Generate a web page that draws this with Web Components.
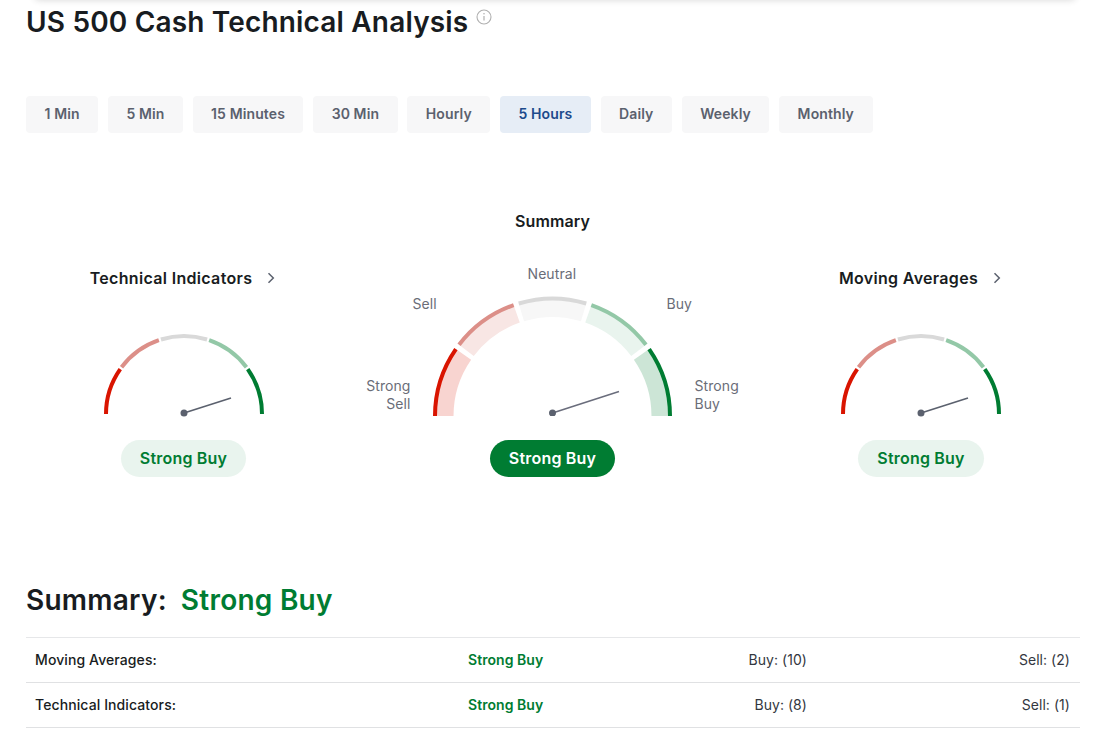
<!DOCTYPE html>
<html><head><meta charset="utf-8"><title>US 500 Cash Technical Analysis</title>
<style>
html,body{margin:0;padding:0;background:#fff;overflow:hidden}
body{font-family:Inter,"Liberation Sans",sans-serif;color:#181c21;height:750px}
</style></head><body>
<ta-page>
  <ta-heading>US 500 Cash Technical Analysis</ta-heading>
  <ta-tabs>
    <ta-tab>1 Min</ta-tab><ta-tab>5 Min</ta-tab><ta-tab>15 Minutes</ta-tab><ta-tab>30 Min</ta-tab><ta-tab>Hourly</ta-tab><ta-tab active>5 Hours</ta-tab><ta-tab>Daily</ta-tab><ta-tab>Weekly</ta-tab><ta-tab>Monthly</ta-tab>
  </ta-tabs>
  <ta-gauges>
    <ta-gauge title-text="Technical Indicators" link></ta-gauge>
    <ta-gauge title-text="Summary" large></ta-gauge>
    <ta-gauge title-text="Moving Averages" link></ta-gauge>
  </ta-gauges>
  <ta-summary>
    <ta-row name="Moving Averages:" signal="Strong Buy" buy="Buy: (10)" sell="Sell: (2)"></ta-row>
    <ta-row name="Technical Indicators:" signal="Strong Buy" buy="Buy: (8)" sell="Sell: (1)"></ta-row>
  </ta-summary>
</ta-page>
<script>
function shadow(el,html){el.attachShadow({mode:'open'}).innerHTML=html;}
customElements.define('ta-page',class extends HTMLElement{constructor(){super();shadow(this,`<style>
:host{display:block;position:relative;padding:0 20px 0 26px;height:750px;box-sizing:border-box}
.top{position:absolute;left:34px;right:24px;top:-10px;height:10px;box-shadow:0 0 7px rgba(0,0,0,.16);border-radius:8px}
</style><div class="top"></div><slot></slot>`);}});
customElements.define('ta-heading',class extends HTMLElement{constructor(){super();shadow(this,`<style>
:host{display:flex;align-items:flex-start;height:44px}
h1{margin:0;font:600 28px/44px Inter,"Liberation Sans",sans-serif;letter-spacing:.17px;color:#181c21}
svg{margin:9px 0 0 8px;display:block}
</style><h1><slot></slot></h1>
<svg width="16" height="16" viewBox="0 0 16 16" fill="none" stroke="#b0b0b0" stroke-width="1.1"><circle cx="8" cy="8" r="7"/><path d="M8 7v4.500" stroke-width="1.2"/><circle cx="8" cy="4.800" r=".8" fill="#b0b0b0" stroke="none"/></svg>`);}});
customElements.define('ta-tabs',class extends HTMLElement{constructor(){super();shadow(this,`<style>
:host{display:flex;gap:9.6px;margin-top:52px}
</style><slot></slot>`);}});
customElements.define('ta-tab',class extends HTMLElement{constructor(){super();const a=this.hasAttribute('active');shadow(this,`<style>
:host{display:block;height:37px;padding:0 18.55px;border-radius:4px;font:600 14px/36px Inter,"Liberation Sans",sans-serif;letter-spacing:.11px;background:${a?'#e6edf6':'#f7f7f8'};color:${a?'#1c4a8c':'#5b616e'};white-space:nowrap}
</style><slot></slot>`);}});
customElements.define('ta-gauges',class extends HTMLElement{constructor(){super();shadow(this,`<style>
:host{display:grid;grid-template-columns:315px 423px 314px;align-items:end;margin-top:76px;height:268px}
</style><slot></slot>`);}});
function arc(cx,cy,r,a0,a1){const p=a=>{const t=a*Math.PI/180;return (cx-r*Math.cos(t)).toFixed(2)+' '+(cy-r*Math.sin(t)).toFixed(2)};return `M${p(a0)}A${r} ${r} 0 0 1 ${p(a1)}`;}
const SEGS=[['#d91400','#f8d4d0'],['#dc8f88','#f8e6e4'],['#d9d9d9','#f7f7f7'],['#93c8a7','#e9f4ee'],['#007c32','#cce5d6']];
customElements.define('ta-gauge',class extends HTMLElement{constructor(){super();
const large=this.hasAttribute('large'),link=this.hasAttribute('link'),title=this.getAttribute('title-text');
let svg='';
if(large){
  SEGS.forEach((c,i)=>{const a0=i*36+(i?1.3:0),a1=(i+1)*36-(i<4?1.3:0);
    svg+=`<path d="${arc(119.5,120,108.5,a0,a1)}" fill="none" stroke="${c[1]}" stroke-width="19"/>`;
    svg+=`<path d="${arc(119.5,120,117.5,a0,a1)}" fill="none" stroke="${c[0]}" stroke-width="4"/>`;});
  svg=`<svg width="240" height="120" viewBox="0 0 240 120">${svg}<path d="M119.500 117L186 95.500" stroke="#6a6d7c" stroke-width="1.6"/><circle cx="119.500" cy="117" r="3.5" fill="#5b616e"/></svg>`;
}else{
  SEGS.forEach((c,i)=>{const a0=i*36+(i?.8:0),a1=(i+1)*36-(i<4?.8:0);
    svg+=`<path d="${arc(80,80,78,a0,a1)}" fill="none" stroke="${c[0]}" stroke-width="4"/>`;});
  svg=`<svg width="160" height="80" viewBox="0 0 160 80" style="overflow:visible">${svg}<path d="M80 79L127 64" stroke="#5b616e" stroke-width="1.6"/><circle cx="80" cy="79" r="3.5" fill="#5b616e"/></svg>`;
}
shadow(this,`<style>
:host{display:flex;flex-direction:column;align-items:center}
.t{display:flex;align-items:center;gap:14px;font:600 16px/24px Inter,"Liberation Sans",sans-serif;letter-spacing:${link?.32:.1}px;color:#181c21;height:24px}
.t svg{display:block;margin-right:1px}
.g{position:relative;display:block;margin-top:${large?63:44}px;height:${large?120:80}px}
.g>svg{display:block}
.l{position:absolute;font:400 14px/18px Inter,"Liberation Sans",sans-serif;letter-spacing:.08px;color:#6a6d78;white-space:nowrap}
.pill{margin-top:${large?24:26}px;height:37px;box-sizing:border-box;padding:0 19px;border-radius:19px;font:600 16px/37px Inter,"Liberation Sans",sans-serif;letter-spacing:.2px;background:${large?'#007c32':'#e9f4ee'};color:${large?'#fff':'#007c32'}}
</style>
<div class="t"><span>${title}</span>${link?'<svg width="10" height="12" viewBox="0 0 10 12" fill="none" stroke="#5b616e" stroke-width="1.5"><path d="M2.500 1.200L7.300 6L2.500 10.800"/></svg>':''}</div>
<div class="g">${svg}${large?`
<span class="l" style="left:95px;top:-31px">Neutral</span>
<span class="l" style="left:-20px;top:-1px">Sell</span>
<span class="l" style="left:234px;top:-1px">Buy</span>
<span class="l" style="right:262px;top:81px;text-align:right">Strong<br>Sell</span>
<span class="l" style="left:262px;top:81px">Strong<br>Buy</span>`:''}</div>
<div class="pill">Strong Buy</div>`);}});
customElements.define('ta-summary',class extends HTMLElement{constructor(){super();shadow(this,`<style>
:host{display:block;margin-top:106px}
h2{margin:0;height:34px;font:600 28px/34px Inter,"Liberation Sans",sans-serif;letter-spacing:.25px;color:#181c21;display:flex;gap:14px}
h2 span{color:#007c32}
.t{margin-top:20px;border-top:1px solid #e6e7e9}
</style><h2>Summary:<span>Strong Buy</span></h2><div class="t"><slot></slot></div>`);}});
customElements.define('ta-row',class extends HTMLElement{constructor(){super();const g=n=>this.getAttribute(n);shadow(this,`<style>
:host{display:grid;grid-template-columns:433px 120px 219px 1fr;height:45px;box-sizing:border-box;align-items:center;padding:0 10px 0 9px;border-bottom:1px solid #e0e1e3;font:500 14px/20px Inter,"Liberation Sans",sans-serif;letter-spacing:.1px;color:#181c21}
.s{color:#007c32;font-weight:600;letter-spacing:.05px}.b,.e{text-align:right;color:#333740;font-weight:400;letter-spacing:.05px}
</style><span>${g('name')}</span><span class="s">${g('signal')}</span><span class="b">${g('buy')}</span><span class="e">${g('sell')}</span>`);}});
</script>
</body></html>
